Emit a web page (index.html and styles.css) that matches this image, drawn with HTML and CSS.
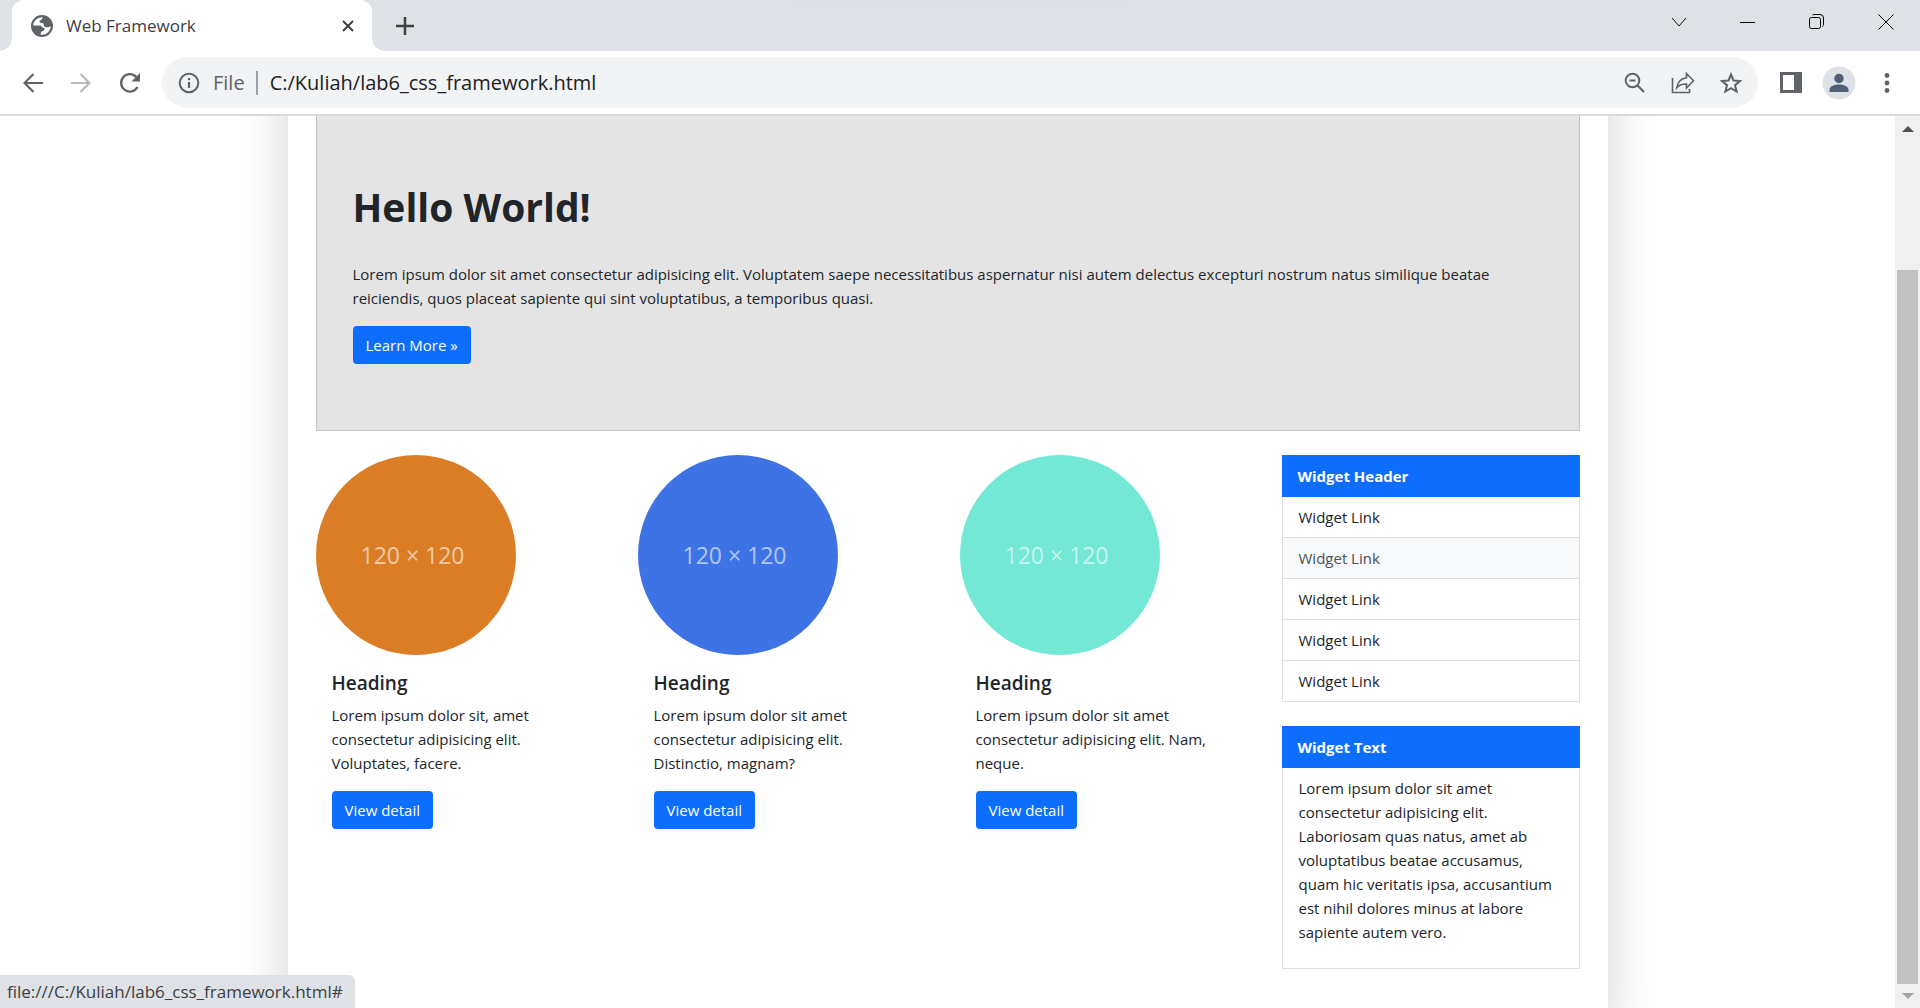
FILE: index.html
```html
<!DOCTYPE html>
<html lang="en">
<head>
<meta charset="utf-8">
<title>Web Framework</title>
<link rel="stylesheet" href="styles.css">
</head>
<body>
<header class="tabstrip">
  <div class="tab">
    <svg class="favicon" viewBox="0 0 24 24" aria-hidden="true"><circle cx="12" cy="12" r="10.800" fill="#fff" stroke="#5f6368" stroke-width="2.400"/><path d="M14 1.500C11.500 3 12.500 5 10.500 5.500C9 6 9 8 10 8.500C12 9 12.500 8 13.500 9.500C14.500 11.500 13.500 12 15.500 13C17.500 14 19.500 12.500 22.500 12.500C23 6 19 2 14 1.500ZM1.500 11.500H9C12 11.500 12 14 13.500 14C15.500 14.500 15 17 13 17.500C10.500 18 11.500 20 9.500 22.300C4 21 1 16.500 1.500 11.500Z" fill="#5f6368"/></svg>
    <span class="tab-title">Web Framework</span>
    <button class="icon-btn tab-close" aria-label="Close tab"><svg width="14" height="14" viewBox="0 0 14 14"><path d="M2 2l10 10M12 2L2 12" stroke="#3c4043" stroke-width="2"/></svg></button>
  </div>
  <button class="icon-btn new-tab" aria-label="New tab"><svg width="18" height="18" viewBox="0 0 18 18"><path d="M9 0v18M0 9h18" stroke="#3c4043" stroke-width="2.500"/></svg></button>
  <div class="window-shade"></div>
  <div class="window-controls">
    <button class="icon-btn" aria-label="Search tabs"><svg width="16" height="16" viewBox="0 0 16 16"><path d="M1 4l7 8 7-8" fill="none" stroke="#111" stroke-width="1"/></svg></button>
    <button class="icon-btn" aria-label="Minimize"><svg width="16" height="16" viewBox="0 0 16 16"><path d="M0 8.500h15" stroke="#000"/></svg></button>
    <button class="icon-btn" aria-label="Restore"><svg width="16" height="16" viewBox="0 0 16 16"><rect x=".5" y="3.500" width="11" height="11" rx="2" fill="none" stroke="#000"/><path d="M3.500 1Q4 .5 5 .5h6Q14.500.5 14.500 4v6.500q0 1-1 2" fill="none" stroke="#000"/></svg></button>
    <button class="icon-btn" aria-label="Close"><svg width="16" height="16" viewBox="0 0 16 16"><path d="M.5.5l15 15M15.500.5l-15 15" stroke="#000"/></svg></button>
  </div>
</header>
<nav class="toolbar">
  <div class="nav-buttons">
    <button class="icon-btn" aria-label="Back"><svg width="20" height="20" viewBox="0 0 20 20"><path d="M20 10H2M10.500 1L1.500 10l9 9" fill="none" stroke="#5f6368" stroke-width="2.200"/></svg></button>
    <button class="icon-btn" aria-label="Forward" disabled><svg width="20" height="20" viewBox="0 0 20 20"><path d="M0 10h18M9.500 1l9 9-9 9" fill="none" stroke="#bababa" stroke-width="2.200"/></svg></button>
    <button class="icon-btn" aria-label="Reload"><svg width="22" height="22" viewBox="0 0 22 22"><path d="M18.500 15A8.700 8.700 0 1 1 17.500 5.200" fill="none" stroke="#5f6368" stroke-width="2.300"/><path d="M21 1v8.500h-8.500z" fill="#5f6368"/></svg></button>
  </div>
  <div class="omnibox">
    <svg width="22" height="22" viewBox="0 0 22 22" aria-hidden="true"><circle cx="11" cy="11" r="9.300" fill="none" stroke="#5f6368" stroke-width="2"/><path d="M11 10v6M11 6v2.200" stroke="#5f6368" stroke-width="2.200"/></svg>
    <label class="scheme" for="address">File</label>
    <input class="address" id="address" type="text" value="C:/Kuliah/lab6_css_framework.html">
    <div class="omnibox-actions">
      <button class="icon-btn" aria-label="Zoom"><svg width="22" height="22" viewBox="0 0 22 22"><circle cx="8.500" cy="8.500" r="6.800" fill="none" stroke="#5f6368" stroke-width="2"/><path d="M5.500 8.500h6M13.500 13.500l6.500 6.500" stroke="#5f6368" stroke-width="2"/></svg></button>
      <button class="icon-btn" aria-label="Share"><svg width="24" height="22" viewBox="0 0 24 22"><path d="M1.500 6v14.500h17V17M15.500 1.500l7 7.300-7 7.200v-4c-4.500 0-7.500 1-9.700 3.700.8-5 3.700-9.200 9.700-9.900z" fill="none" stroke="#5f6368" stroke-width="1.600"/></svg></button>
      <button class="icon-btn" aria-label="Bookmark"><svg width="22" height="22" viewBox="0 0 22 22"><path d="M11 2.500l2.500 6 6.500.5-5 4.200 1.600 6.300L11 16.100l-5.600 3.400L7 13.200 2 9l6.500-.5z" fill="none" stroke="#5f6368" stroke-width="2"/></svg></button>
    </div>
  </div>
  <button class="icon-btn" aria-label="Side panel"><svg width="22" height="22" viewBox="0 0 22 22"><path d="M0 0h22v21H0zM3 3v15h11V3z" fill="#5f6368" fill-rule="evenodd"/></svg></button>
  <button class="icon-btn avatar" aria-label="Profile"><svg width="34" height="34" viewBox="0 0 34 34"><circle cx="17" cy="17" r="16.500" fill="#dee1e6"/><circle cx="17" cy="12.500" r="4.700" fill="#525e75"/><path d="M7.500 26v-2.500c0-3 5-5 9.500-5s9.500 2 9.500 5V26z" fill="#525e75"/></svg></button>
  <button class="icon-btn" aria-label="Menu"><svg width="6" height="22" viewBox="0 0 6 22"><g fill="#5f6368"><circle cx="3" cy="3.500" r="2.400"/><circle cx="3" cy="11" r="2.400"/><circle cx="3" cy="18.500" r="2.400"/></g></svg></button>
</nav>
<div class="viewport">
  <div class="page">
    <main class="container">
      <section class="hero">
        <h1>Hello World!</h1>
        <p>Lorem ipsum dolor sit amet consectetur adipisicing elit. Voluptatem saepe necessitatibus aspernatur nisi autem delectus excepturi nostrum natus similique beatae reiciendis, quos placeat sapiente qui sint voluptatibus, a temporibus quasi.</p>
        <a class="btn" href="#">Learn More »</a>
      </section>
      <div class="columns">
        <article class="card">
          <div class="thumb thumb-orange">120 × 120</div>
          <div class="card-body">
            <h5>Heading</h5>
            <p>Lorem ipsum dolor sit, amet consectetur adipisicing elit. Voluptates, facere.</p>
            <a class="btn" href="#">View detail</a>
          </div>
        </article>
        <article class="card">
          <div class="thumb thumb-blue">120 × 120</div>
          <div class="card-body">
            <h5>Heading</h5>
            <p>Lorem ipsum dolor sit amet consectetur adipisicing elit. Distinctio, magnam?</p>
            <a class="btn" href="#">View detail</a>
          </div>
        </article>
        <article class="card">
          <div class="thumb thumb-teal">120 × 120</div>
          <div class="card-body">
            <h5>Heading</h5>
            <p>Lorem ipsum dolor sit amet consectetur adipisicing elit. Nam, neque.</p>
            <a class="btn" href="#">View detail</a>
          </div>
        </article>
        <aside class="sidebar">
          <section class="widget">
            <h2>Widget Header</h2>
            <ul>
              <li><a href="#">Widget Link</a></li>
              <li><a class="hovered" href="#">Widget Link</a></li>
              <li><a href="#">Widget Link</a></li>
              <li><a href="#">Widget Link</a></li>
              <li><a href="#">Widget Link</a></li>
            </ul>
          </section>
          <section class="widget">
            <h2>Widget Text</h2>
            <div class="widget-text">
              <p>Lorem ipsum dolor sit amet consectetur adipisicing elit. Laboriosam quas natus, amet ab voluptatibus beatae accusamus, quam hic veritatis ipsa, accusantium est nihil dolores minus at labore sapiente autem vero.</p>
            </div>
          </section>
        </aside>
      </div>
    </main>
  </div>
  <div class="scrollbar">
    <svg width="12" height="6" viewBox="0 0 12 6" aria-hidden="true"><path d="M0 6l6-6 6 6z" fill="#505050"/></svg>
    <div class="track"><div class="thumb-bar"></div></div>
    <svg width="12" height="6" viewBox="0 0 12 6" aria-hidden="true"><path d="M0 0l6 6 6-6z" fill="#a3a3a3"/></svg>
  </div>
  <div class="status">file:///C:/Kuliah/lab6_css_framework.html#</div>
</div>
</body>
</html>
```

FILE: styles.css
```css
* { box-sizing: border-box; }

body {
  margin: 0;
  height: 100vh;
  display: flex;
  flex-direction: column;
  overflow: hidden;
  background: #fff;
  color: #212529;
  font: 15px/24px "Open Sans", "Noto Sans", sans-serif;
}

h1, h2, h5, p, ul { margin: 0; padding: 0; }

.icon-btn {
  display: flex;
  align-items: center;
  justify-content: center;
  padding: 0;
  border: 0;
  background: none;
}

/* Browser tab strip */
.tabstrip {
  flex: none;
  display: flex;
  height: 51px;
  padding-left: 12px;
  background: #dee1e6;
}

.tab {
  position: relative;
  display: flex;
  align-items: center;
  width: 360px;
  padding: 0 17px 0 19px;
  border-radius: 12px 12px 0 0;
  background: #fff;
}

.tab::before,
.tab::after {
  content: "";
  position: absolute;
  bottom: 0;
  width: 12px;
  height: 12px;
}

.tab::before { right: 100%; background: radial-gradient(circle at 0 0, transparent 11px, #fff 12px); }
.tab::after { left: 100%; background: radial-gradient(circle at 100% 0, transparent 11px, #fff 12px); }

.favicon { width: 22px; height: 22px; margin-right: 13px; }

.tab-title {
  flex: 1;
  color: #3c4043;
  font-size: 17px;
}

.new-tab { margin-left: 24px; }

.window-shade {
  flex: none;
  width: 320px;
  height: 1px;
  margin-left: 386px;
  box-shadow: 0 0 10px 1px #d2d5db;
}

.window-controls {
  display: flex;
  align-items: center;
  gap: 53px;
  height: 43px;
  margin-left: auto;
  margin-right: 26px;
}

/* Address bar row */
.toolbar {
  flex: none;
  display: flex;
  align-items: center;
  height: 65px;
  padding: 0 30px 0 23px;
  border-bottom: 2px solid #dadada;
}

.nav-buttons { display: flex; gap: 28px; margin-right: 21px; }

.omnibox {
  flex: 1;
  display: flex;
  align-items: center;
  height: 51px;
  margin-right: 22px;
  padding: 0 16px 0 16px;
  border-radius: 26px;
  background: #f1f3f4;
  font-size: 20px;
}

.scheme {
  margin-left: 13px;
  padding-right: 11px;
  border-right: 2px solid #9aa0a6;
  color: #5f6368;
}

.address {
  flex: 1;
  min-width: 0;
  padding: 0 0 0 12px;
  border: 0;
  background: none;
  color: #202124;
  font: inherit;
}

.omnibox-actions { display: flex; gap: 25px; }

.avatar { margin: 0 28px 0 20px; }

/* Scrolled document area */
.viewport {
  position: relative;
  flex: 1;
  min-height: 0;
  display: flex;
}

.page {
  flex: 1;
  min-width: 0;
  overflow: hidden;
}

.container {
  max-width: 1320px;
  margin: -80px auto 0;
  padding: 80px 28px 44px;
  background: #fff;
  box-shadow: 0 16px 48px rgba(0, 0, 0, .175);
}

.hero {
  padding: 67px 36px 66px;
  border: solid #c4c4c4;
  border-width: 0 1px 1px;
  background: #e4e4e4;
}

.hero h1 {
  margin-bottom: 31px;
  font-size: 39px;
  line-height: 48px;
  font-weight: 700;
}

.hero p, .card p { margin-bottom: 16px; }

.btn {
  display: inline-block;
  padding: 7px 13px;
  border-radius: 4px;
  background: #0d6efd;
  color: #fff;
  text-decoration: none;
  vertical-align: top;
}

.columns {
  display: grid;
  grid-template-columns: repeat(4, 1fr);
  gap: 24px;
  margin-top: 24px;
}

.thumb {
  display: flex;
  align-items: center;
  justify-content: center;
  width: 200px;
  height: 200px;
  padding-right: 6px;
  border-radius: 50%;
  color: rgba(255, 255, 255, .6);
  font-size: 23px;
}

.thumb-orange { background: #da7d25; }
.thumb-blue { background: #3e73e6; }
.thumb-teal { background: #72e8d5; }

.card-body { padding: 16px 24px 16px 16px; }

.card h5 {
  margin-bottom: 8px;
  font-size: 19px;
  line-height: 24px;
  font-weight: 600;
}

.sidebar {
  display: flex;
  flex-direction: column;
  gap: 24px;
}

.widget h2 {
  padding: 9px 16px;
  background: #0d6efd;
  color: #fff;
  font-size: 15px;
  line-height: 24px;
}

.widget ul { list-style: none; }

.widget a {
  display: block;
  padding: 8px 16px;
  border: solid #dfdfdf;
  border-width: 0 1px 1px;
  color: #212529;
  text-decoration: none;
}

.widget a.hovered {
  background: #f8f9fa;
  color: #495057;
}

.widget-text {
  padding: 8px 16px 24px;
  border: solid #dfdfdf;
  border-width: 0 1px 1px;
}

/* Scrollbar */
.scrollbar {
  flex: none;
  display: flex;
  flex-direction: column;
  align-items: center;
  width: 25px;
  padding: 10px 0 9px;
  background: #f0f0f0;
}

.track {
  flex: 1;
  display: grid;
  grid-template-rows: 129fr 714fr;
  padding: 9px 0;
}

.thumb-bar {
  grid-row: 2;
  width: 21px;
  background: #c1c1c1;
}

/* Link target bubble */
.status {
  position: absolute;
  left: 0;
  bottom: 0;
  height: 33px;
  padding: 0 12px 0 7px;
  border-radius: 0 6px 0 0;
  background: #dee1e6;
  color: #3c4043;
  font-size: 17px;
  line-height: 34px;
}
```
